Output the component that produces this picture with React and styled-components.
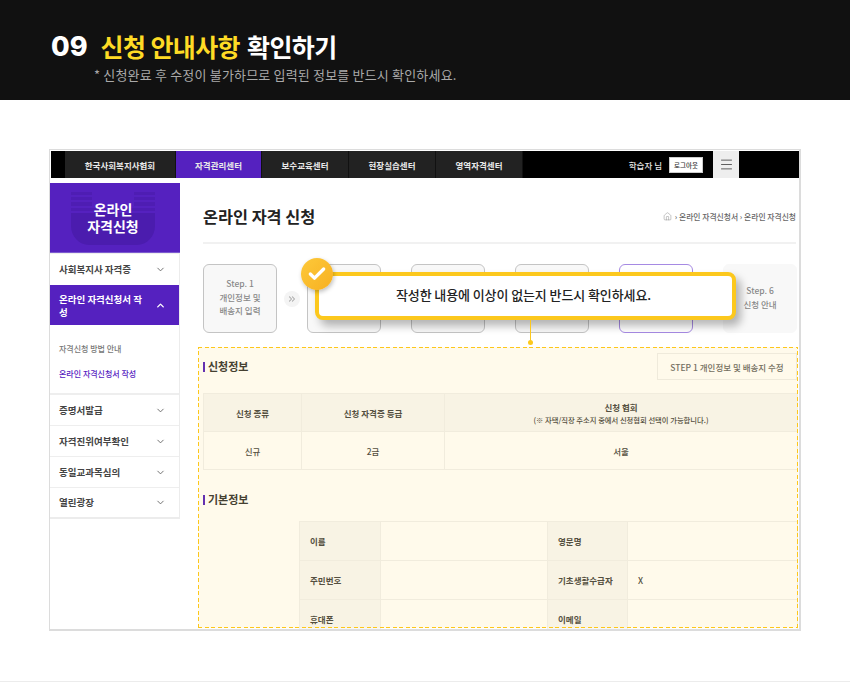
import React from "react";
import styled, { createGlobalStyle } from "styled-components";
import { ChevronDown, ChevronUp, ChevronsRight, Home, Menu, Check } from "lucide-react";

const purple = "#5521bf";
const sans = `"Noto Sans CJK KR", "Noto Sans", sans-serif`;
const dash = "#fdc71a";

const Global = createGlobalStyle`
  html, body { margin: 0; padding: 0; background: #fff; }
  body { font-family: ${sans}; color: #333; }
  * { box-sizing: border-box; }
`;

const Page = styled.div`
  width: 850px;
  height: 682px;
  border-bottom: 1px solid #ececec;
  overflow: hidden;
`;
const Banner = styled.header`
  height: 100px;
  background: #111;
  padding: 29px 0 0 51px;
`;
const Title = styled.h1`
  margin: 0;
  display: flex;
  align-items: center;
  height: 34px;
  font-size: 25px;
  font-weight: 700;
  letter-spacing: -0.6px;
  color: #fff;
`;
const Num = styled.span`
  font-family: Inter, sans-serif;
  font-size: 27px;
  font-weight: 800;
  letter-spacing: 0;
  margin-right: 13px;
`;
const Yellow = styled.span`
  color: #fedb25;
  margin-right: 7px;
`;
const Sub = styled.p`
  margin: 3px 0 0 43px;
  font-size: 13px;
  line-height: 18px;
  color: #a9a9a9;
  letter-spacing: 0.18px;
`;
const Section = styled.section`
  padding: 49px 49px 0;
`;
const Frame = styled.div`
  position: relative;
  width: 752px;
  height: 482px;
  border: 1px solid #dcdcdc;
  border-width: 1px 2px 2px 1px;
  padding-top: 1px;
  overflow: hidden;
  background: #fff;
`;
const Nav = styled.nav`
  display: flex;
  align-items: stretch;
  height: 27px;
  margin-left: 1px;
  padding-left: 14px;
  background: #000;
`;
const NavItem = styled.a`
  width: ${(p) => p.$w}px;
  display: flex;
  align-items: center;
  justify-content: center;
  background: ${(p) => (p.$active ? purple : "#222")};
  border-right: 1px solid #111;
  color: #e9e9e9;
  font-size: 8.5px;
  font-weight: 700;
`;
const NavRight = styled.div`
  margin-left: auto;
  display: flex;
  align-items: center;
  color: #e8e8e8;
  font-size: 8.5px;
  font-weight: 500;
  padding-right: 60px;
`;
const Logout = styled.button`
  margin-left: 7px;
  width: 34px;
  height: 16px;
  padding: 0;
  border: 1px solid #ccc;
  background: #fff;
  color: #333;
  font: 500 6.5px ${sans};
`;
const MenuBtn = styled.button`
  margin-left: 10px;
  width: 26px;
  height: 27px;
  padding: 0;
  border: 0;
  background: #eee;
  color: #555;
  display: flex;
  align-items: center;
  justify-content: center;
`;
const Body = styled.div`
  display: flex;
  padding-top: 5px;
`;
const Side = styled.aside`
  width: 130px;
  flex: none;
`;
const Hero = styled.div`
  position: relative;
  height: 70px;
  padding-right: 4px;
  background: ${purple};
  border-bottom: 1px solid #7c5ad0;
  display: flex;
  align-items: center;
  justify-content: center;
  text-align: center;
  color: #fff;
  font-size: 14px;
  font-weight: 700;
`;
const HeroArt = styled.svg`
  position: absolute;
  left: 21px;
  top: 9px;
`;
const HeroText = styled.div`
  position: relative;
`;
const HeroLine = styled.div`
  height: 17px;
  line-height: 17px;
`;
const SideList = styled.div`
  border: 1px solid #ececec;
  border-top: 0;
  border-left: 0;
  border-bottom-width: 2px;
`;
const SideItem = styled.div`
  height: ${(p) => p.$h || 31}px;
  display: flex;
  align-items: center;
  justify-content: space-between;
  padding: 0 13px 0 9px;
  background: ${(p) => (p.$active ? purple : "#fff")};
  color: ${(p) => (p.$active ? "#fff" : "#444")};
  font-size: 9.5px;
  line-height: 13px;
  font-weight: 700;
  border-top: 1px solid ${(p) => (p.$active ? purple : "#eee")};
  svg { flex: none; color: ${(p) => (p.$active ? "#fff" : "#666")}; }
`;
const SideLabel = styled.span`
  width: 90px;
`;
const SubMenu = styled.div`
  height: 69px;
  padding-top: 18px;
  font-size: 8px;
  font-weight: 500;
  color: #777;
  border-bottom: 1px solid #eee;
`;
const SubItem = styled.div`
  height: 25px;
  padding-left: 9px;
  line-height: 12px;
  color: ${(p) => (p.$on ? purple : "#777")};
`;
const Main = styled.main`
  flex: 1;
  margin-left: 23px;
  margin-right: 2px;
  min-width: 0;
`;
const PageHead = styled.div`
  height: 61px;
  padding-top: 7px;
  margin-right: 1px;
  display: flex;
  align-items: center;
  justify-content: space-between;
  border-bottom: 2px solid #f1f1f1;
`;
const PageTitle = styled.h2`
  margin: 0;
  font-size: 16.3px;
  font-weight: 700;
  color: #222;
`;
const Crumb = styled.div`
  display: flex;
  align-items: center;
  gap: 3px;
  font-size: 7.8px;
  color: #666;
  font-weight: 500;
  svg { color: #888; }
`;
const Steps = styled.div`
  margin: 20px 1px 0 0;
  height: 69px;
  display: flex;
  align-items: center;
  gap: 7px;
`;
const Step = styled.div`
  width: 74px;
  height: 69px;
  flex: none;
  display: flex;
  flex-direction: column;
  align-items: center;
  justify-content: center;
  text-align: center;
  border: 1px solid ${(p) => (p.$variant === "now" ? "#a68ae3" : p.$variant === "plain" ? "#f8f8f8" : "#c4c4c4")};
  border-radius: 6px;
  background: ${(p) => (p.$variant === "now" ? "#fff" : "#f8f8f8")};
  font-size: 8.5px;
  line-height: 13.5px;
  font-weight: 500;
  color: #888;
  padding-bottom: 2px;
`;
const StepArrow = styled.span`
  width: 16px;
  height: 16px;
  border-radius: 50%;
  flex: none;
  background: #f4f4f4;
  color: #aaa;
  display: flex;
  align-items: center;
  justify-content: center;
`;
const SecHead = styled.div`
  display: flex;
  align-items: center;
  justify-content: space-between;
  height: 27px;
  margin-top: ${(p) => p.$top}px;
`;
const SecTitle = styled.h3`
  margin: 0;
  padding-left: 5px;
  font-size: 11px;
  line-height: 13px;
  font-weight: 700;
  color: #333;
  position: relative;
  &::before {
    content: "";
    position: absolute;
    left: 0;
    top: 2px;
    width: 2px;
    height: 10px;
    background: ${purple};
  }
`;
const EditBtn = styled.button`
  width: 140px;
  height: 27px;
  padding: 0;
  background: #fff;
  border: 1px solid #eee;
  color: #666;
  font: 500 8.5px ${sans};
`;
const Table = styled.table`
  border-collapse: collapse;
  table-layout: fixed;
  width: ${(p) => p.$w}px;
  margin: ${(p) => p.$m};
  font-size: 8.5px;
  color: #444;
  font-weight: 500;
`;
const Th = styled.th`
  height: ${(p) => p.$h}px;
  padding: ${(p) => (p.$left ? "0 0 0 10px" : "0")};
  background: #f8f8f8;
  border: 1px solid #f0f0f0;
  text-align: ${(p) => (p.$left ? "left" : "center")};
  font-weight: 700;
  line-height: 12px;
`;
const Td = styled.td`
  height: ${(p) => p.$h}px;
  padding: ${(p) => (p.$left ? "0 0 0 10px" : "0")};
  border: 1px solid #f0f0f0;
  text-align: ${(p) => (p.$left ? "left" : "center")};
`;
const Note = styled.small`
  display: block;
  margin-top: 2px;
  font-size: 7.3px;
  line-height: 10px;
  font-weight: 500;
`;
const Highlight = styled.div`
  position: absolute;
  left: 148px;
  top: 197px;
  width: 600px;
  height: 281px;
  background-color: rgba(255, 205, 30, 0.09);
  background-image:
    repeating-linear-gradient(90deg, ${dash} 0 4px, transparent 4px 6.5px),
    repeating-linear-gradient(90deg, ${dash} 0 4px, transparent 4px 6.5px),
    repeating-linear-gradient(0deg, ${dash} 0 4px, transparent 4px 6.5px),
    repeating-linear-gradient(0deg, ${dash} 0 4px, transparent 4px 6.5px);
  background-size: 100% 1px, 100% 1px, 1px 100%, 1px 100%;
  background-position: 0 0, 0 100%, 0 0, 100% 0;
  background-repeat: no-repeat;
  pointer-events: none;
`;
const Callout = styled.div`
  position: absolute;
  left: 265px;
  top: 122px;
  width: 421px;
  height: 48px;
  border: 4px solid #fcc81d;
  border-radius: 8px;
  background: #fff;
  box-shadow: 5px 6px 8px rgba(0, 0, 0, 0.28);
  display: flex;
  align-items: center;
  justify-content: center;
  padding: 0 4px 3px 0;
  font-size: 13px;
  font-weight: 500;
  letter-spacing: -0.1px;
  color: #222;
`;
const CheckBadge = styled.span`
  position: absolute;
  left: -18px;
  top: -18px;
  width: 32px;
  height: 32px;
  border-radius: 50%;
  background: linear-gradient(135deg, #fdc93a, #f7b021);
  box-shadow: 1px 2px 4px rgba(0, 0, 0, 0.25);
  color: #fff;
  display: flex;
  align-items: center;
  justify-content: center;
`;
const Stem = styled.span`
  position: absolute;
  left: 211px;
  top: 44px;
  width: 1px;
  height: 23px;
  background: #fcc81d;
  &::after {
    content: "";
    position: absolute;
    left: -2px;
    bottom: -2px;
    width: 5px;
    height: 5px;
    border-radius: 50%;
    background: #fcc81d;
  }
`;

const navs = [["한국사회복지사협회", 111], ["자격관리센터", 86, true], ["보수교육센터", 87], ["현장실습센터", 87], ["영역자격센터", 87]];
const stepData = [
  { lines: ["Step. 1", "개인정보 및", "배송지 입력"] },
  { lines: [] },
  { lines: [] },
  { lines: [] },
  { lines: [], variant: "now" },
  { lines: ["Step. 6", "신청 안내"], variant: "plain" },
];

export default function App() {
  return (
    <Page>
      <Global />
      <Banner>
        <Title>
          <Num>09</Num>
          <Yellow>신청 안내사항</Yellow>
          확인하기
        </Title>
        <Sub>* 신청완료 후 수정이 불가하므로 입력된 정보를 반드시 확인하세요.</Sub>
      </Banner>
      <Section>
        <Frame>
          <Nav>
            {navs.map(([t, w, a]) => (
              <NavItem key={t} $w={w} $active={a}>{t}</NavItem>
            ))}
            <NavRight>
              학습자 님
              <Logout>로그아웃</Logout>
              <MenuBtn><Menu size={15} strokeWidth={1.5} /></MenuBtn>
            </NavRight>
          </Nav>
          <Body>
            <Side>
              <Hero>
                <HeroArt width="84" height="53" viewBox="0 0 84 53">
                  <g fill="#4b1cae">
                    <path d="M0 0h21v3H0zM63 0h21v3H63zM0 5h21v3H0zM63 5h21v3H63zM0 10h21v4H0zM63 10h21v4H63zM0 16h84v3H0z" opacity=".7" />
                    <path d="M0 21h84v13c0 10-8 19-18 19H18C8 53 0 44 0 34z" />
                  </g>
                </HeroArt>
                <HeroText>
                  <HeroLine>온라인</HeroLine>
                  <HeroLine>자격신청</HeroLine>
                </HeroText>
              </Hero>
              <SideList>
                <SideItem $h={32}>사회복지사 자격증<ChevronDown size={11} /></SideItem>
                <SideItem $h={40} $active><SideLabel>온라인 자격신청서 작성</SideLabel><ChevronUp size={11} strokeWidth={3} /></SideItem>
                <SubMenu>
                  <SubItem>자격신청 방법 안내</SubItem>
                  <SubItem $on>온라인 자격신청서 작성</SubItem>
                </SubMenu>
                <SideItem>증명서발급<ChevronDown size={11} /></SideItem>
                <SideItem>자격진위여부확인<ChevronDown size={11} /></SideItem>
                <SideItem>동일교과목심의<ChevronDown size={11} /></SideItem>
                <SideItem $h={30}>열린광장<ChevronDown size={11} /></SideItem>
              </SideList>
            </Side>
            <Main>
              <PageHead>
                <PageTitle>온라인 자격 신청</PageTitle>
                <Crumb><Home size={9} strokeWidth={1.3} /> › 온라인 자격신청서 › 온라인 자격신청</Crumb>
              </PageHead>
              <Steps>
                {stepData.map((s, i) => (
                  <React.Fragment key={i}>
                    <Step $variant={s.variant}>{s.lines.map((l) => <span key={l}>{l}</span>)}</Step>
                    {i < 5 && <StepArrow><ChevronsRight size={10} strokeWidth={2.5} /></StepArrow>}
                  </React.Fragment>
                ))}
              </Steps>
              <SecHead $top={20}>
                <SecTitle>신청정보</SecTitle>
                <EditBtn>STEP 1 개인정보 및 배송지 수정</EditBtn>
              </SecHead>
              <Table $w={594} $m="13px 0 0">
                <colgroup><col width="98" /><col width="143" /><col width="353" /></colgroup>
                <thead>
                  <tr>
                    <Th $h={38}>신청 종류</Th>
                    <Th $h={38}>신청 자격증 등급</Th>
                    <Th $h={38}>신청 협회<Note>(※ 자택/직장 주소지 중에서 신청협회 선택이 가능합니다.)</Note></Th>
                  </tr>
                </thead>
                <tbody>
                  <tr><Td $h={38}>신규</Td><Td $h={38}>2급</Td><Td $h={38}>서울</Td></tr>
                </tbody>
              </Table>
              <SecHead $top={16}>
                <SecTitle>기본정보</SecTitle>
              </SecHead>
              <Table $w={498} $m="8px 0 0 96px">
                <colgroup><col width="81" /><col width="167" /><col width="80" /><col width="170" /></colgroup>
                <tbody>
                  <tr><Th $h={39} $left>이름</Th><Td $h={39} /><Th $h={39} $left>영문명</Th><Td $h={39} /></tr>
                  <tr><Th $h={39} $left>주민번호</Th><Td $h={39} /><Th $h={39} $left>기초생활수급자</Th><Td $h={39} $left>X</Td></tr>
                  <tr><Th $h={39} $left>휴대폰</Th><Td $h={39} /><Th $h={39} $left>이메일</Th><Td $h={39} /></tr>
                </tbody>
              </Table>
            </Main>
          </Body>
          <Highlight />
          <Callout>
            <CheckBadge><Check size={20} strokeWidth={4} /></CheckBadge>
            작성한 내용에 이상이 없는지 반드시 확인하세요.
            <Stem />
          </Callout>
        </Frame>
      </Section>
    </Page>
  );
}
